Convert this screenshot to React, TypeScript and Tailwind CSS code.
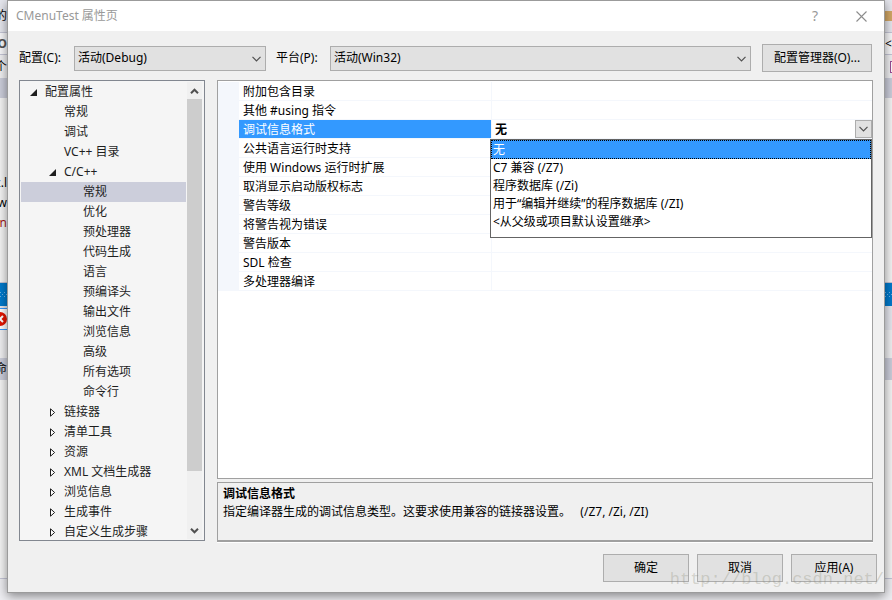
import React from "react";

type Node = { label: string; depth: 0 | 1 | 2; state?: "open" | "closed"; selected?: boolean };

const tree: Node[] = [
  { label: "配置属性", depth: 0, state: "open" },
  { label: "常规", depth: 1 },
  { label: "调试", depth: 1 },
  { label: "VC++ 目录", depth: 1 },
  { label: "C/C++", depth: 1, state: "open" },
  { label: "常规", depth: 2, selected: true },
  { label: "优化", depth: 2 },
  { label: "预处理器", depth: 2 },
  { label: "代码生成", depth: 2 },
  { label: "语言", depth: 2 },
  { label: "预编译头", depth: 2 },
  { label: "输出文件", depth: 2 },
  { label: "浏览信息", depth: 2 },
  { label: "高级", depth: 2 },
  { label: "所有选项", depth: 2 },
  { label: "命令行", depth: 2 },
  { label: "链接器", depth: 1, state: "closed" },
  { label: "清单工具", depth: 1, state: "closed" },
  { label: "资源", depth: 1, state: "closed" },
  { label: "XML 文档生成器", depth: 1, state: "closed" },
  { label: "浏览信息", depth: 1, state: "closed" },
  { label: "生成事件", depth: 1, state: "closed" },
  { label: "自定义生成步骤", depth: 1, state: "closed" },
];

const indent = { 0: "pl-[5px]", 1: "pl-6", 2: "pl-[43px]" };

const properties = [
  "附加包含目录",
  "其他 #using 指令",
  "调试信息格式",
  "公共语言运行时支持",
  "使用 Windows 运行时扩展",
  "取消显示启动版权标志",
  "警告等级",
  "将警告视为错误",
  "警告版本",
  "SDL 检查",
  "多处理器编译",
];

const options = [
  "无",
  "C7 兼容 (/Z7)",
  "程序数据库 (/Zi)",
  "用于“编辑并继续”的程序数据库 (/ZI)",
  "<从父级或项目默认设置继承>",
];

function Chevron({ className = "" }: { className?: string }) {
  return (
    <svg width="9" height="6" viewBox="0 0 9 6" className={className} aria-hidden="true">
      <path d="M0.5 0.8 4.5 4.8 8.5 0.8" fill="none" stroke="#505050" strokeWidth="1.2" />
    </svg>
  );
}

function ScrollArrow({ className = "" }: { className?: string }) {
  return (
    <svg width="9" height="6" viewBox="0 0 9 6" className={className} aria-hidden="true">
      <path d="M1 0.8 4.5 4.3 8 0.8" fill="none" stroke="#505050" strokeWidth="2" />
    </svg>
  );
}

function Expander({ state }: { state?: "open" | "closed" }) {
  return (
    <span className="flex h-5 w-[19px] shrink-0 items-center pl-[4px]">
      {state === "open" && (
        <svg width="7" height="7" viewBox="0 0 7 7" aria-hidden="true">
          <path d="M7 0V7H0Z" fill="#1e1e1e" />
        </svg>
      )}
      {state === "closed" && (
        <svg width="6" height="9" viewBox="0 0 6 9" className="ml-px" aria-hidden="true">
          <path d="M0.5 0.8V8.2L4.6 4.5Z" fill="#fff" stroke="#1e1e1e" />
        </svg>
      )}
    </span>
  );
}

function Combo({ id, value, className }: { id: string; value: string; className: string }) {
  return (
    <div className={`relative h-[25px] ${className}`}>
      <select
        id={id}
        defaultValue={value}
        className="h-full w-full appearance-none rounded-none border border-[#adadad] bg-[#e1e1e1] pr-6 pl-[3px] outline-none"
      >
        <option>{value}</option>
      </select>
      <Chevron className="pointer-events-none absolute top-[10px] right-[5px]" />
    </div>
  );
}

function Band({ className, left, right }: { className: string; left?: React.ReactNode; right?: React.ReactNode }) {
  return (
    <div className={`flex shrink-0 items-center justify-between ${className}`}>
      <div className="flex h-full w-[7px] items-center justify-end overflow-hidden whitespace-nowrap">{left}</div>
      <div className="flex h-full w-[7px] items-center overflow-hidden whitespace-nowrap">{right}</div>
    </div>
  );
}

function Grip() {
  return (
    <svg width="7" height="5" viewBox="0 0 7 5" aria-hidden="true">
      <path d="M0 0h1v1H0zM4 0h1v1H4zM2 2h1v1H2zM6 2h1v1H6zM0 4h1v1H0zM4 4h1v1H4z" fill="#6eb4e6" />
    </svg>
  );
}

function Backdrop() {
  return (
    <div className="flex h-full flex-col bg-[#f0f0f1]" aria-hidden="true">
      <Band className="h-8 bg-[#e6e7ee]" left={<span>的</span>} right={<span className="h-[10px] w-full bg-[#d3a866]" />} />
      <Band className="h-[23px] border-y border-[#c5c6d6] bg-[#f8f8fa]" left={<b className="text-[#555555]">O</b>} right={<span>&lt;指</span>} />
      <Band
        className="h-[23px] bg-[#f0f0f2]"
        left={<span>个</span>}
        right={<span className="ml-[5px] h-3 w-3 shrink-0 border border-[#9b4f96] bg-white" />}
      />
      <Band className="h-5 bg-[#cccedb]" />
      <Band className="h-[75px] bg-[#f5f5f5]" />
      <Band className="h-5 bg-[#f5f5f5]" left={<span>c.l</span>} />
      <Band className="h-5 bg-[#f5f5f5]" left={<span>w</span>} />
      <Band className="h-5 bg-[#f5f5f5]" left={<span className="text-[#a31515]">n</span>} />
      <Band className="h-[49px] bg-[#f5f5f5]" />
      <Band className="h-6 border-t border-[#c5c6d6] bg-[#007acc]" left={<Grip />} right={<Grip />} />
      <Band className="h-[2px] bg-[#e6e7ee]" />
      <Band
        className="h-[22px] bg-[#e6e7ee]"
        left={
          <span className="flex h-full w-full items-center justify-end border-y border-[#3399ff] bg-white">
            <svg width="14" height="14" viewBox="0 0 14 14" className="shrink-0">
              <circle cx="7" cy="7" r="7" fill="#e51400" />
              <path d="M4 4l6 6M10 4l-6 6" stroke="#fff" strokeWidth="2" />
            </svg>
          </span>
        }
      />
      <Band className="h-7 bg-[#f0f0f2]" />
      <Band className="h-[22px] bg-[#cccedb]" left={<span>“命</span>} />
      <Band className="h-[198px] bg-[#f5f5f5]" />
      <div className="grow border-t border-[#c5c6d6] bg-[#eeeef2]" />
    </div>
  );
}

function PropertyGrid() {
  return (
    <div className="relative min-h-0 grow border border-[#a0a0a0] bg-white pt-px">
      <table className="w-full table-fixed border-separate border-spacing-0">
        <colgroup>
          <col className="w-[21px]" />
          <col className="w-[253px]" />
          <col />
        </colgroup>
        <tbody>
          {properties.map((name, i) => (
            <tr key={name} className="h-[19px]">
              <td className="bg-[#f4f7fc] p-0" />
              <th
                scope="row"
                className={`border-r border-b border-[#f4f7fc] p-0 text-left font-normal whitespace-nowrap ${
                  i === 2 ? "bg-[#3399ff] bg-clip-padding text-white" : ""
                }`}
              >
                <span className="block h-[18px] pl-1 leading-5">{name}</span>
              </th>
              <td className="border-b border-[#f4f7fc] p-0">
                {i === 2 && (
                  <div className="flex h-[18px]">
                    <input
                      aria-label="调试信息格式"
                      readOnly
                      value="无"
                      className="h-[18px] min-w-0 grow bg-transparent pt-[2px] pl-[3px] font-bold outline-none"
                    />
                    <button
                      type="button"
                      aria-label="打开列表"
                      className="flex h-[18px] w-[17px] items-center justify-center border border-[#adadad] bg-[#e1e1e1]"
                    >
                      <Chevron />
                    </button>
                  </div>
                )}
              </td>
            </tr>
          ))}
        </tbody>
      </table>
      <ul
        role="listbox"
        aria-label="调试信息格式"
        className="absolute top-[58px] right-0 left-[272px] h-[99px] border border-[#646464] bg-white leading-[18px]"
      >
        {options.map((o, i) => (
          <li
            key={o}
            role="option"
            aria-selected={i === 0}
            className={
              i === 0
                ? "h-[19px] border border-dotted border-black bg-[#3399ff] pl-px text-white"
                : "h-[18px] pl-[2px]"
            }
          >
            {o}
          </li>
        ))}
      </ul>
    </div>
  );
}

const pushButton = "h-7 border border-[#adadad] bg-[#e1e1e1] text-center";

export default function App() {
  return (
    <div className="relative h-screen overflow-hidden font-['Noto_Sans','Noto_Sans_CJK_SC',sans-serif] text-[12px] leading-[18px] text-black">
      <Backdrop />
      <section
        role="dialog"
        aria-labelledby="title"
        className="absolute inset-x-[7px] top-0 bottom-[7px] flex flex-col border border-[#9b9b9b] bg-[#f0f0f0] shadow-[0_3px_10px_rgba(0,0,0,0.45)]"
      >
        <header className="flex h-[30px] shrink-0 items-center bg-white pl-2 text-[#999999]">
          <h1 id="title" className="grow">
            CMenuTest 属性页
          </h1>
          <button type="button" aria-label="帮助" className="w-[46px] text-[14px]">
            ?
          </button>
          <button type="button" aria-label="关闭" className="flex w-[46px] justify-center">
            <svg width="11" height="11" viewBox="0 0 11 11" aria-hidden="true">
              <path d="M0.5 0.5l10 10M10.5 0.5l-10 10" stroke="#8c8c8c" strokeWidth="1.1" />
            </svg>
          </button>
        </header>

        <div className="flex shrink-0 items-center pt-[13px] pr-3 pl-[11px]">
          <label htmlFor="config" className="w-[55px] shrink-0">
            配置(C):
          </label>
          <Combo id="config" value="活动(Debug)" className="w-[192px] shrink-0" />
          <label htmlFor="platform" className="ml-[10px] w-[54px] shrink-0">
            平台(P):
          </label>
          <Combo id="platform" value="活动(Win32)" className="grow" />
          <button type="button" className={`ml-[11px] w-[110px] shrink-0 ${pushButton}`}>
            配置管理器(O)...
          </button>
        </div>

        <div className="flex min-h-0 grow gap-3 px-[11px] pt-2">
          <div className="mb-px flex w-[186px] shrink-0 border border-[#828790] bg-[#f5f5f5] p-px text-[#1e1e1e]">
            <ul role="tree" className="min-w-0 grow overflow-hidden leading-5">
              {tree.map((n, i) => (
                <li
                  key={i}
                  role="treeitem"
                  aria-selected={!!n.selected}
                  className={`flex h-5 whitespace-nowrap ${indent[n.depth]} ${n.selected ? "bg-[#cccedb]" : ""}`}
                >
                  <Expander state={n.state} />
                  {n.label}
                </li>
              ))}
            </ul>
            <div className="mr-px ml-px flex w-[15px] shrink-0 flex-col bg-[#f0f0f0]">
              <div className="flex h-[17px] shrink-0 items-center justify-center">
                <ScrollArrow className="rotate-180" />
              </div>
              <div className="h-[372px] shrink bg-[#cdcdcd]" />
              <div className="grow" />
              <div className="flex h-[17px] shrink-0 items-center justify-center">
                <ScrollArrow />
              </div>
            </div>
          </div>

          <div className="flex min-w-0 grow flex-col gap-[3px]">
            <PropertyGrid />
            <div className="h-[60px] shrink-0 border border-b-2 border-[#a0a0a0] px-[5px] pt-[2px] shadow-[0_1px_0_#ffffff]">
              <h2 className="font-bold">调试信息格式</h2>
              <p>指定编译器生成的调试信息类型。这要求使用兼容的链接器设置。&nbsp;&nbsp;&nbsp;(/Z7, /Zi, /ZI)</p>
            </div>
          </div>
        </div>

        <footer className="flex shrink-0 justify-end gap-2 pt-3 pr-[7px] pb-[10px]">
          {["确定", "取消", "应用(A)"].map((t) => (
            <button key={t} type="button" className={`w-[86px] ${pushButton}`}>
              {t}
            </button>
          ))}
        </footer>
      </section>
      <span className="pointer-events-none absolute right-2 bottom-[10px] font-['Liberation_Mono',monospace] text-[17px] leading-5 text-[#8c8c78]/30">
        http://blog.csdn.net/
      </span>
    </div>
  );
}
